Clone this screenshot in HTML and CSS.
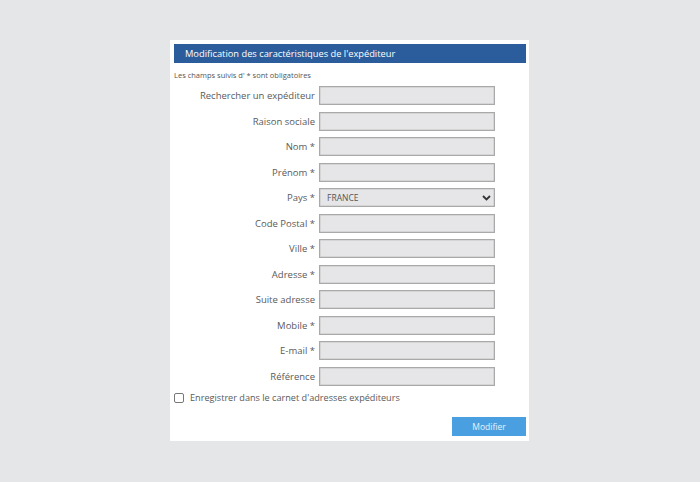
FILE: index.html
```html
<!DOCTYPE html>
<html lang="fr">
<head>
<meta charset="utf-8">
<link rel="stylesheet" href="styles.css">
</head>
<body>
<div class="card">
  <div class="header">Modification des caractéristiques de l'expéditeur</div>
  <div class="note">Les champs suivis d' * sont obligatoires</div>
  <div class="form">
    <label class="lbl">Rechercher un expéditeur</label><input class="field" type="text">
    <label class="lbl">Raison sociale</label><input class="field" type="text">
    <label class="lbl">Nom *</label><input class="field" type="text">
    <label class="lbl">Prénom *</label><input class="field" type="text">
    <label class="lbl">Pays *</label>
    <div class="field select"><span>FRANCE</span>
      <svg class="chev" width="9" height="6" viewBox="0 0 9 6"><path d="M1 1l3.5 3.5L8 1" fill="none" stroke="#333" stroke-width="1.8"/></svg>
    </div>
    <label class="lbl">Code Postal *</label><input class="field" type="text">
    <label class="lbl">Ville *</label><input class="field" type="text">
    <label class="lbl">Adresse *</label><input class="field" type="text">
    <label class="lbl">Suite adresse</label><input class="field" type="text">
    <label class="lbl">Mobile *</label><input class="field" type="text">
    <label class="lbl">E-mail *</label><input class="field" type="text">
    <label class="lbl">Référence</label><input class="field" type="text">
  </div>
  <div class="check"><span class="box"></span><span>Enregistrer dans le carnet d'adresses expéditeurs</span></div>
  <div class="actions"><button class="btn">Modifier</button></div>
</div>
</body>
</html>
```
FILE: styles.css
```css
html, body { margin: 0; padding: 0; }
body {
  background: #e5e6e8;
  font-family: "Open Sans", "Noto Sans", sans-serif;
  color: #5a5a5a;
  padding-top: 40px;
}
.card {
  width: 352px;
  margin-left: 170px;
  background: #fff;
  padding: 4px 3px 5px 4px;
}
.header {
  height: 19px;
  background: #2b5d9c;
  color: #fff;
  font-size: 9.3px;
  line-height: 19px;
  padding-left: 11px;
}
.note {
  font-size: 7.5px;
  color: #555;
  margin-top: 6px;
  line-height: 12px;
  height: 12px;
}
.form {
  display: grid;
  grid-template-columns: 141px 176px;
  column-gap: 4px;
  row-gap: 6.5px;
  margin-top: 5px;
  align-items: center;
}
.lbl {
  text-align: right;
  font-size: 9.5px;
  color: #5a5a5a;
  line-height: 19px;
}
.field {
  box-sizing: border-box;
  height: 19px;
  width: 176px;
  margin: 0;
  background: #e6e6e8;
  border: 1px solid #a9a9a9;
  box-shadow: inset 0 0 0 0.5px #c4c4c4;
  padding: 0;
}
.select {
  display: flex;
  align-items: center;
  justify-content: space-between;
  padding: 0 3px 0 7px;
  font-size: 8.5px;
  color: #555;
}
.check {
  display: flex;
  align-items: center;
  gap: 6px;
  margin-top: 6px;
  font-size: 9.15px;
  color: #5a5a5a;
  height: 12px;
}
.box {
  width: 8px;
  height: 8px;
  border: 1px solid #777;
  border-radius: 2px;
  background: #fff;
}
.actions {
  display: flex;
  justify-content: flex-end;
  margin-top: 13px;
}
.btn {
  width: 74px;
  height: 19px;
  border: none;
  background: #4a9fe0;
  color: #e8f2fb;
  font-family: "Open Sans", sans-serif;
  font-size: 8.5px;
  padding: 0;
}
```
